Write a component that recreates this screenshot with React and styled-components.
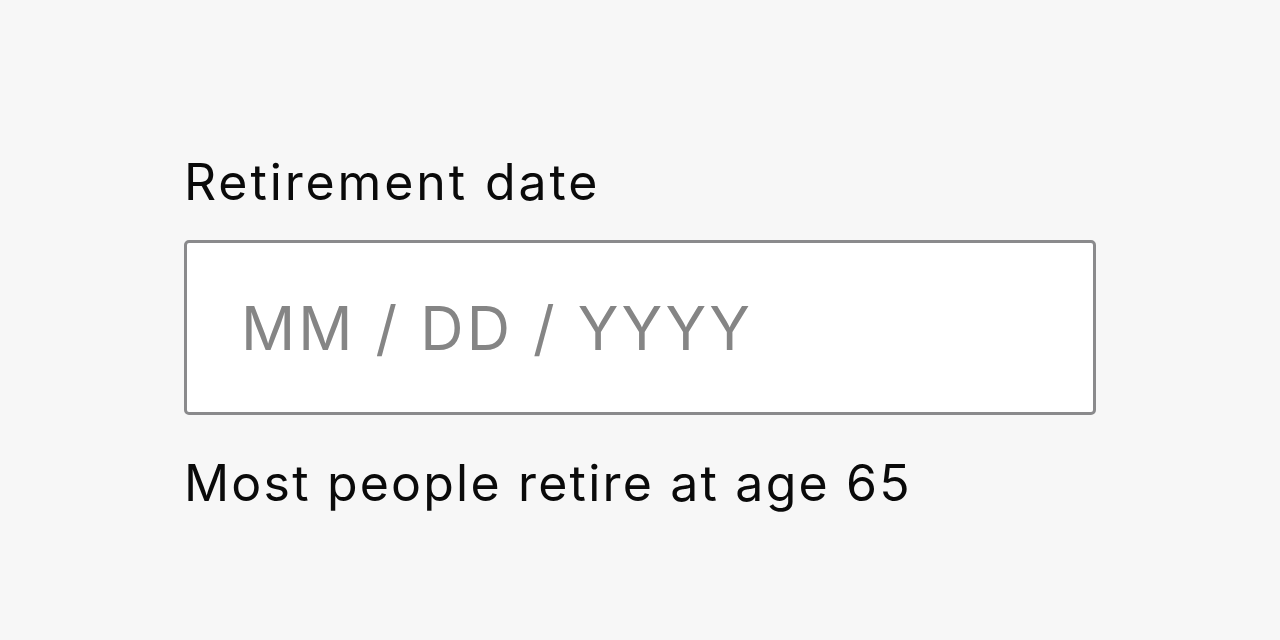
import React from 'react';
import styled, { createGlobalStyle } from 'styled-components';

const GlobalStyle = createGlobalStyle`
  html, body {
    margin: 0;
    padding: 0;
    background: #f7f7f7;
    font-family: Inter, Lato, sans-serif;
  }
`;

const Page = styled.main`
  width: 1280px;
  height: 640px;
  box-sizing: border-box;
  padding: 150px 0 0 184px;
`;

const Field = styled.div`
  display: flex;
  flex-direction: column;
  width: 912px;
`;

const Label = styled.label`
  font-size: 50px;
  line-height: 64px;
  color: #0a0a0a;
  letter-spacing: 2.9px;
  margin-bottom: 26px;
`;

const DateInput = styled.input`
  box-sizing: border-box;
  width: 912px;
  height: 175px;
  border: 3px solid #8a8a8c;
  border-radius: 5px;
  background: #ffffff;
  padding: 0 0 0 54px;
  font-family: inherit;
  font-size: 60px;
  letter-spacing: 3.1px;
  color: #111;
  outline: none;

  &::placeholder {
    color: #858585;
    opacity: 1;
  }
`;

const Hint = styled.p`
  margin: 36px 0 0;
  font-size: 50px;
  line-height: 64px;
  color: #0a0a0a;
  letter-spacing: 2.2px;
`;

export default function App() {
  return (
    <Page>
      <GlobalStyle />
      <Field>
        <Label htmlFor="retire">Retirement date</Label>
        <DateInput id="retire" placeholder="MM / DD / YYYY" />
        <Hint>Most people retire at age 65</Hint>
      </Field>
    </Page>
  );
}
